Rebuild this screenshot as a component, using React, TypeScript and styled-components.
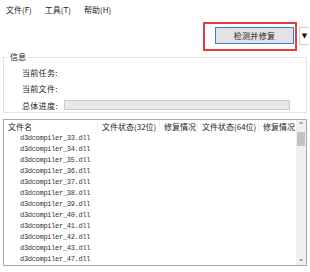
import React from "react";
import styled, { createGlobalStyle } from "styled-components";

const files = [33, 34, 35, 36, 37, 38, 39, 40, 41, 42, 43, 47].map(n => `d3dcompiler_${n}.dll`);

const columns = ["文件名", "文件状态(32位)", "修复情况", "文件状态(64位)", "修复情况"];

const App = () => {
    return (
        <>
            <GlobalStyle />
            <Window>
                <MenuBar>
                    <MenuItem>文件(F)</MenuItem>
                    <MenuItem>工具(T)</MenuItem>
                    <MenuItem>帮助(H)</MenuItem>
                </MenuBar>
                <ToolRow>
                    <Highlight>
                        <FixButton>检测并修复</FixButton>
                    </Highlight>
                    <DropArrow>▼</DropArrow>
                </ToolRow>
                <InfoBox>
                    <Legend>信息</Legend>
                    <InfoRow>
                        <Label>当前任务:</Label>
                    </InfoRow>
                    <InfoRow>
                        <Label>当前文件:</Label>
                    </InfoRow>
                    <InfoRow>
                        <Label>总体进度:</Label>
                        <Progress />
                    </InfoRow>
                </InfoBox>
                <ListBox>
                    <ListMain>
                        <Header>
                            {columns.map((c, i) => (
                                <HeadCell key={i} $last={i === columns.length - 1}>{c}</HeadCell>
                            ))}
                        </Header>
                        {files.map(f => (
                            <FileRow key={f}>{f}</FileRow>
                        ))}
                    </ListMain>
                    <ScrollBar>
                        <ScrollArrow>⌃</ScrollArrow>
                        <Thumb />
                        <ScrollSpacer />
                        <ScrollArrow>⌄</ScrollArrow>
                    </ScrollBar>
                </ListBox>
            </Window>
        </>
    );
};

export default App;

const GlobalStyle = createGlobalStyle`
    html, body {
        margin: 0;
        padding: 0;
        background: #ffffff;
    }
    body {
        font-family: "Noto Sans CJK SC", "Noto Sans", sans-serif;
        font-size: 8px;
        color: #1a1a1a;
    }
`

const Window = styled.div`
    width: 310px;
    height: 272px;
    display: flex;
    flex-direction: column;
    overflow: hidden;
`

const MenuBar = styled.div`
    display: flex;
    align-items: center;
    gap: 13px;
    height: 20px;
    padding-left: 6px;
`

const MenuItem = styled.span`
    font-size: 8px;
    line-height: 10px;
`

const ToolRow = styled.div`
    display: flex;
    align-items: flex-start;
    justify-content: flex-end;
    height: 32px;
    padding-top: 2px;
    padding-right: 1px;
    box-sizing: border-box;
`

const Highlight = styled.div`
    width: 94px;
    height: 29px;
    border: 2px solid #e2403f;
    box-sizing: border-box;
    display: flex;
    align-items: flex-start;
    justify-content: flex-end;
    padding: 3px 1px 0 0;
`

const FixButton = styled.div`
    width: 79px;
    height: 17px;
    box-sizing: border-box;
    border: 1px solid #2f7fd6;
    background: #e3e3e3;
    display: flex;
    align-items: center;
    justify-content: center;
    font-size: 8px;
    letter-spacing: 0.3px;
    color: #222;
`

const DropArrow = styled.div`
    width: 10px;
    height: 18px;
    margin-top: 5px;
    margin-left: 2px;
    box-sizing: border-box;
    border: 1px solid #d0d0d0;
    border-right: none;
    display: flex;
    align-items: center;
    justify-content: center;
    font-family: "DejaVu Sans", sans-serif;
    font-size: 7px;
    color: #111;
`

const InfoBox = styled.fieldset`
    margin: 0 3px;
    padding: 2px 0 0 18px;
    height: 61px;
    box-sizing: border-box;
    border: 1px solid #e3e3e3;
    display: flex;
    flex-direction: column;
`

const Legend = styled.legend`
    padding: 0 2px;
    margin-left: -14px;
    font-size: 8px;
    line-height: 10px;
`

const InfoRow = styled.div`
    display: flex;
    align-items: center;
    height: 16px;
    &:last-child {
        height: 18px;
    }
`

const Label = styled.span`
    width: 42px;
    font-size: 8px;
    letter-spacing: 0.3px;
    color: #222;
`

const Progress = styled.div`
    width: 226px;
    height: 10px;
    box-sizing: border-box;
    border: 1px solid #cccccc;
    background: #e8e8e8;
`

const ListBox = styled.div`
    margin: 6px 3px 0 3px;
    height: 147px;
    box-sizing: border-box;
    border: 1px solid #a8a8a8;
    display: flex;
`

const ListMain = styled.div`
    flex: 1;
    display: flex;
    flex-direction: column;
`

const Header = styled.div`
    display: grid;
    grid-template-columns: 94px 62px 38px 61px 1fr;
    height: 16px;
    align-items: center;
`

const HeadCell = styled.div<{ $last?: boolean }>`
    padding-left: 4px;
    font-size: 8px;
    white-space: nowrap;
    height: 100%;
    display: flex;
    align-items: center;
    border-right: ${p => (p.$last ? "none" : "1px solid #f0f0f0")};
`

const FileRow = styled.div`
    height: 11px;
    line-height: 11px;
    padding-left: 16px;
    font-family: "Liberation Mono", monospace;
    font-size: 7px;
    letter-spacing: -0.3px;
    color: #333;
`

const ScrollBar = styled.div`
    width: 10px;
    background: #f0f0f0;
    display: flex;
    flex-direction: column;
    align-items: center;
`

const ScrollArrow = styled.div`
    height: 12px;
    font-family: "DejaVu Sans", sans-serif;
    font-size: 8px;
    line-height: 12px;
    color: #606060;
`

const Thumb = styled.div`
    width: 8px;
    height: 14px;
    background: #c2c2c2;
`

const ScrollSpacer = styled.div`
    flex: 1;
`
